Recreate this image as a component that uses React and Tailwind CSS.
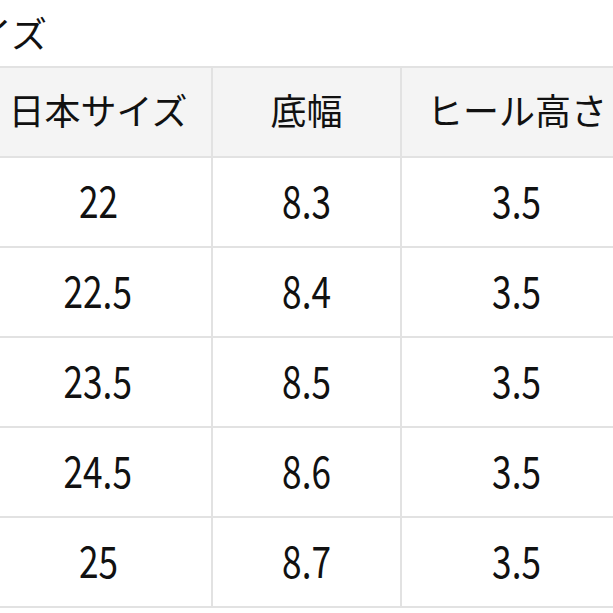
import React from "react";

const rows = [
  ["22", "8.3", "3.5"],
  ["22.5", "8.4", "3.5"],
  ["23.5", "8.5", "3.5"],
  ["24.5", "8.6", "3.5"],
  ["25", "8.7", "3.5"],
];

const font = { fontFamily: '"Noto Sans CJK JP", "Noto Sans", sans-serif' };

export default function App() {
  return (
    <div className="w-[613px] h-[613px] overflow-hidden bg-white text-[#111]" style={font}>
      {/* 見出し（左側は画面外） */}
      <div className="h-[66px] ml-[-60px] pt-[8px] text-[36px] leading-[48px]">サイズ</div>
      <table className="ml-[-17px] table-fixed border-collapse w-[649px]">
        <colgroup>
          <col className="w-[228px]" />
          <col className="w-[189px]" />
          <col className="w-[232px]" />
        </colgroup>
        <thead>
          <tr className="h-[90px] bg-[#f4f4f4]">
            <th className="border-2 border-[#e2e2e2] text-[36px] font-normal pb-[6px]">日本サイズ</th>
            <th className="border-2 border-[#e2e2e2] text-[36px] font-normal pb-[6px]">底幅</th>
            <th className="border-2 border-[#e2e2e2] text-[36px] font-normal pb-[6px]">ヒール高さ</th>
          </tr>
        </thead>
        <tbody>
          {rows.map((r, i) => (
            <tr key={i} className="h-[90px]">
              {r.map((v, j) => (
                <td key={j} className="border-2 border-[#e2e2e2] text-center text-[44px] leading-none pb-[6px]">
                  <span className="inline-block scale-x-[0.8]">{v}</span>
                </td>
              ))}
            </tr>
          ))}
        </tbody>
      </table>
    </div>
  );
}
